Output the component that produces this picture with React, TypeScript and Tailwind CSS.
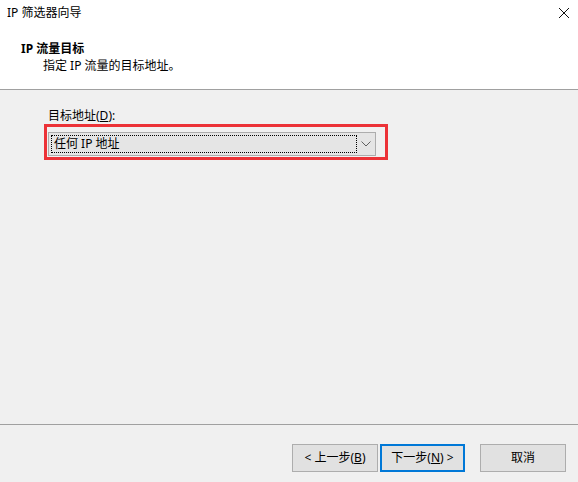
import React from "react"

const font = { fontFamily: '"Noto Sans", "Noto Sans CJK SC", sans-serif' }

function WinButton({ children, focused = false, className = "" }: { children: React.ReactNode; focused?: boolean; className?: string }) {
  return (
    <button
      className={`h-[28px] flex items-center justify-center text-[12px] leading-[16px] text-black bg-[#e1e1e1] ${
        focused ? "border-2 border-[#0078d7]" : "border border-[#adadad]"
      } ${className}`}
    >
      {children}
    </button>
  )
}

export default function App() {
  return (
    <div className="w-[578px] h-[482px] flex flex-col bg-[#f0f0f0] text-black overflow-hidden" style={font}>
      {/* header */}
      <div className="h-[89px] bg-white flex flex-col">
        <div className="flex items-start justify-between pt-[5px] pl-[7px] pr-[8px]">
          <span className="text-[12px] leading-[16px]">IP 筛选器向导</span>
          <svg width="12" height="12" viewBox="0 0 12 12" className="mt-[2px]">
            <path d="M1 1 L11 11 M11 1 L1 11" stroke="#111" strokeWidth="1" fill="none" />
          </svg>
        </div>
        <div className="pl-[21px] mt-[20px] text-[12px] leading-[16px] font-bold">IP 流量目标</div>
        <div className="pl-[43px] mt-[1px] text-[12px] leading-[16px]">指定 IP 流量的目标地址。</div>
      </div>
      <div className="h-px bg-[#a0a0a0]" />

      {/* body */}
      <div className="h-[334px] flex flex-col">
        <div className="pl-[48px] mt-[18px] text-[12px] leading-[16px]">
          目标地址(<span className="underline">D</span>):
        </div>
        <div className="ml-[44px] w-[344px] h-[36px] border-[3px] border-[#ec3237] pt-[5px] pl-[1px]">
          <div className="w-[328px] h-[24px] bg-[#e5e5e5] border border-[#adadad] flex items-center">
            <div className="ml-[2px] w-[306px] h-[18px] border border-dotted border-black flex items-center pl-[2px] text-[12px] leading-[16px]">
              任何 IP 地址
            </div>
            <div className="flex-1 flex items-center justify-center">
              <svg width="10" height="6" viewBox="0 0 10 6">
                <path d="M0.5 0.5 L5 5 L9.5 0.5" stroke="#606060" strokeWidth="1" fill="none" />
              </svg>
            </div>
          </div>
        </div>
      </div>
      <div className="h-px bg-[#a0a0a0]" />

      {/* footer */}
      <div className="flex-1 flex justify-end items-start pt-[19px] pr-[12px]">
        <WinButton className="w-[86px]">
          &lt; 上一步(<span className="underline">B</span>)
        </WinButton>
        <WinButton focused className="w-[85px] ml-[2px]">
          下一步(<span className="underline">N</span>) &gt;
        </WinButton>
        <WinButton className="w-[86px] ml-[15px]">取消</WinButton>
      </div>
    </div>
  )
}
